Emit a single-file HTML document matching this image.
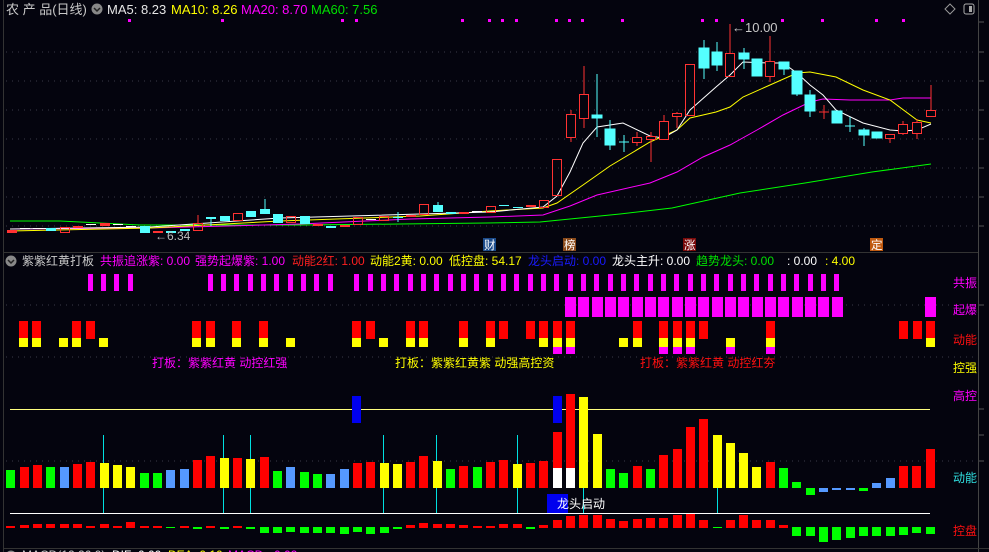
<!DOCTYPE html>
<html><head><meta charset="utf-8"><style>
html,body{margin:0;padding:0;background:#04040e;}
svg{display:block;font-family:"Liberation Sans","Noto Sans CJK SC",sans-serif;}
</style></head><body>
<svg width="989" height="552" viewBox="0 0 989 552" xmlns="http://www.w3.org/2000/svg">
<rect width="989" height="552" fill="#04040e"/>
<!-- borders -->
<line x1="3.5" y1="0" x2="3.5" y2="552" stroke="#333" />
<line x1="978.5" y1="0" x2="978.5" y2="552" stroke="#444"/>
<line x1="4" y1="252.5" x2="978" y2="252.5" stroke="#333"/>
<line x1="4" y1="548.5" x2="989" y2="548.5" stroke="#333"/>
<g stroke="#555"><line x1="979" y1="22" x2="984" y2="22"/><line x1="979" y1="52" x2="984" y2="52"/><line x1="979" y1="81" x2="984" y2="81"/><line x1="979" y1="110" x2="984" y2="110"/><line x1="979" y1="139" x2="984" y2="139"/><line x1="979" y1="168" x2="984" y2="168"/><line x1="979" y1="197" x2="984" y2="197"/><line x1="979" y1="226" x2="984" y2="226"/><line x1="979" y1="305" x2="984" y2="305"/><line x1="979" y1="409" x2="984" y2="409"/><line x1="979" y1="435" x2="984" y2="435"/><line x1="979" y1="461" x2="984" y2="461"/></g>
<!-- grid -->
<g stroke="#3a3a48" stroke-dasharray="1,5">
<line x1="6" y1="52" x2="976" y2="52"/><line x1="6" y1="81" x2="976" y2="81"/><line x1="6" y1="110" x2="976" y2="110"/><line x1="6" y1="139" x2="976" y2="139"/><line x1="6" y1="168" x2="976" y2="168"/><line x1="6" y1="197" x2="976" y2="197"/><line x1="6" y1="226" x2="976" y2="226"/>
<line x1="6" y1="305" x2="976" y2="305"/><line x1="6" y1="357" x2="976" y2="357"/><line x1="6" y1="461" x2="976" y2="461"/>
</g>
<!-- header -->
<text x="6" y="14" font-size="13" fill="#c8c8c8">农 产 品(日线)</text>
<circle cx="97" cy="9" r="5.5" fill="#888"/><path d="M94 8 L97 11 L100 8" stroke="#222" fill="none" stroke-width="1.5"/>
<text x="107" y="14" font-size="13" fill="#e6e6e6">MA5: 8.23</text>
<text x="171" y="14" font-size="13" fill="#ffff00">MA10: 8.26</text>
<text x="241" y="14" font-size="13" fill="#ff00ff">MA20: 8.70</text>
<text x="311" y="14" font-size="13" fill="#00e000">MA60: 7.56</text>
<path d="M950 4 L955 9 L950 14 L945 9 Z" stroke="#999" fill="none"/>
<rect x="964" y="4" width="10" height="10" rx="2" stroke="#aaa" fill="none"/><rect x="969" y="6" width="3" height="6" fill="#aaa"/>
<!-- magenta dots -->
<g fill="#ff00ff"><rect x="128" y="19" width="3" height="3"/><rect x="221" y="19" width="3" height="3"/><rect x="341" y="19" width="3" height="3"/><rect x="355" y="19" width="3" height="3"/><rect x="461" y="19" width="3" height="3"/><rect x="488" y="19" width="3" height="3"/><rect x="501" y="19" width="3" height="3"/><rect x="515" y="19" width="3" height="3"/><rect x="555" y="19" width="3" height="3"/><rect x="568" y="19" width="3" height="3"/><rect x="581" y="19" width="3" height="3"/><rect x="621" y="19" width="3" height="3"/><rect x="701" y="19" width="3" height="3"/><rect x="715" y="19" width="3" height="3"/><rect x="741" y="19" width="3" height="3"/><rect x="781" y="19" width="3" height="3"/><rect x="821" y="19" width="3" height="3"/><rect x="875" y="19" width="3" height="3"/><rect x="902" y="19" width="3" height="3"/></g>
<!-- MA lines -->
<polyline fill="none" stroke="#00ff00" stroke-width="1" points="10,221 60,221 100,223 140,225 300,225 400,224 486,223 540,222 620,214 672,208 740,193 805,183 872,172 931,164"/>
<polyline fill="none" stroke="#ff00ff" stroke-width="1" points="10,229 150,228 300,224 410,219 490,217 543,215 570,206 597,195 650,183 677,172 703,157 730,145 757,130 783,115 810,102 823,99 850,100 890,100 903,98 931,98"/>
<polyline fill="none" stroke="#ffff00" stroke-width="1" points="10,231 150,228 280,221 420,216 490,211 543,208 557,203 583,185 610,166 650,142 677,130 690,118 716,112 730,107 743,97 770,85 797,73 810,72 836,77 863,90 890,100 917,120 931,123"/>
<polyline fill="none" stroke="#ffffff" stroke-width="1" points="10,229 150,227 280,218 420,214 490,212 543,207 557,196 570,172 583,143 597,127 623,123 650,136 663,138 677,130 690,110 716,87 730,75 743,62 770,63 783,63 797,73 810,85 823,95 836,110 863,123 890,130 903,131 917,130 931,124"/>
<!-- candles -->
<g stroke-width="1">
<!-- left small -->
<g fill="#ff3232"><rect x="7" y="230" width="10" height="3"/><rect x="73" y="226" width="10" height="2"/><rect x="100" y="223" width="10" height="3"/><rect x="153" y="231" width="10" height="2"/><rect x="313" y="224" width="10" height="2"/><rect x="340" y="225" width="10" height="2"/><rect x="406" y="215" width="10" height="2"/><rect x="459" y="212" width="10" height="2"/><rect x="526" y="205" width="10" height="2"/></g>
<g fill="#ffffff"><rect x="20" y="228" width="10" height="1"/><rect x="33" y="228" width="10" height="1"/><rect x="86" y="224" width="10" height="1"/><rect x="113" y="224" width="10" height="1"/><rect x="126" y="226" width="10" height="1"/><rect x="366" y="219" width="10" height="1"/><rect x="472" y="211" width="10" height="1"/></g>
<g fill="#54ffff"><rect x="46" y="228" width="10" height="3"/><rect x="140" y="226" width="10" height="7"/><rect x="166" y="231" width="10" height="2"/><rect x="180" y="229" width="10" height="2"/><rect x="206" y="217" width="10" height="2"/><rect x="220" y="216" width="10" height="5"/><rect x="246" y="211" width="10" height="6"/><rect x="260" y="209" width="10" height="5"/><rect x="273" y="214" width="10" height="9"/><rect x="300" y="216" width="10" height="8"/><rect x="326" y="226" width="10" height="2"/><rect x="393" y="217" width="10" height="1"/><rect x="433" y="205" width="10" height="7"/><rect x="446" y="212" width="10" height="2"/><rect x="499" y="205" width="10" height="1"/><rect x="513" y="207" width="10" height="1"/></g>
<g stroke="#54ffff"><line x1="265" y1="199" x2="265" y2="209"/><line x1="211" y1="219" x2="211" y2="226"/><line x1="398" y1="212" x2="398" y2="222"/><line x1="438" y1="202" x2="438" y2="205"/></g>
<g stroke="#ff3232" fill="none"><rect x="60.5" y="227.5" width="9" height="5"/><rect x="193.5" y="223.5" width="9" height="7"/><line x1="198" y1="215" x2="198" y2="223"/><rect x="233.5" y="213.5" width="9" height="7"/><rect x="286.5" y="216.5" width="9" height="6"/><rect x="353.5" y="217.5" width="9" height="7"/><rect x="379.5" y="216.5" width="9" height="4"/><rect x="419.5" y="204.5" width="9" height="10"/><rect x="486.5" y="206.5" width="9" height="6"/><rect x="539.5" y="200.5" width="9" height="7"/></g>
<!-- right big -->
<g stroke="#ff3232" fill="none">
<rect x="552.5" y="159.5" width="9" height="36"/>
<line x1="571" y1="110" x2="571" y2="142"/><rect x="566.5" y="114.5" width="9" height="23" fill="#04040e"/>
<line x1="584" y1="66" x2="584" y2="128"/><rect x="579.5" y="94.5" width="9" height="24" fill="#04040e"/>
<line x1="637" y1="132" x2="637" y2="146"/><rect x="632.5" y="137.5" width="9" height="5" fill="#04040e"/>
<line x1="651" y1="132" x2="651" y2="162"/><rect x="646.5" y="136.5" width="9" height="3" fill="#04040e"/>
<line x1="664" y1="115" x2="664" y2="121"/><rect x="659.5" y="121.5" width="9" height="18" fill="#04040e"/>
<line x1="677" y1="112" x2="677" y2="128"/><rect x="672.5" y="113.5" width="9" height="3" fill="#04040e"/>
<rect x="685.5" y="64.5" width="9" height="51"/>
<line x1="730" y1="24" x2="730" y2="53"/><rect x="725.5" y="53.5" width="9" height="23"/>
<line x1="770" y1="36" x2="770" y2="82"/><rect x="765.5" y="61.5" width="9" height="15" fill="#04040e"/>
<line x1="824" y1="105" x2="824" y2="119"/><line x1="819" y1="112" x2="829" y2="112"/>
<line x1="890" y1="138" x2="890" y2="143"/><rect x="885.5" y="134.5" width="9" height="4" fill="#04040e"/>
<line x1="903" y1="121" x2="903" y2="135"/><rect x="898.5" y="124.5" width="9" height="9" fill="#04040e"/>
<line x1="917" y1="119" x2="917" y2="139"/><rect x="912.5" y="122.5" width="9" height="11" fill="#04040e"/>
<line x1="931" y1="85" x2="931" y2="110"/><rect x="926.5" y="110.5" width="9" height="6" fill="#04040e"/>
</g>
<g stroke="#54ffff" fill="#54ffff">
<line x1="597" y1="74" x2="597" y2="137"/><rect x="592" y="115" width="10" height="3"/>
<line x1="610" y1="120" x2="610" y2="150"/><rect x="605" y="129" width="10" height="16"/>
<line x1="624" y1="135" x2="624" y2="152"/><line x1="619" y1="142" x2="629" y2="142"/>
<line x1="704" y1="40" x2="704" y2="79"/><rect x="699" y="48" width="10" height="20"/>
<line x1="717" y1="42" x2="717" y2="71"/><rect x="712" y="52" width="10" height="13"/>
<line x1="744" y1="48" x2="744" y2="69"/><rect x="739" y="53" width="10" height="6"/>
<rect x="752" y="59" width="10" height="17"/>
<line x1="784" y1="62" x2="784" y2="75"/><rect x="779" y="62" width="10" height="7"/>
<line x1="797" y1="71" x2="797" y2="96"/><rect x="792" y="71" width="10" height="23"/>
<line x1="810" y1="90" x2="810" y2="117"/><rect x="805" y="95" width="10" height="16"/>
<rect x="832" y="111" width="10" height="12"/>
<line x1="850" y1="117" x2="850" y2="132"/><line x1="845" y1="126" x2="855" y2="126"/>
<line x1="864" y1="128" x2="864" y2="146"/><rect x="859" y="130" width="10" height="5"/>
<rect x="872" y="132" width="10" height="6"/>
</g>
</g>
<text x="732" y="32" font-size="13" fill="#c8c8c8">←</text>
<text x="745" y="32" font-size="13" fill="#c8c8c8">10.00</text>
<text x="155" y="240" font-size="12" fill="#bbbbbb">←6.34</text>
<!-- badges -->
<rect x="483" y="238" width="13" height="13" fill="#1a4a8a"/><text x="484" y="249" font-size="11.5" fill="#fff">财</text>
<rect x="563" y="238" width="13" height="13" fill="#8a4a1a"/><text x="564" y="249" font-size="11.5" fill="#fff">榜</text>
<rect x="683" y="238" width="13" height="13" fill="#7a0a0a"/><text x="684" y="249" font-size="11.5" fill="#fff">涨</text>
<rect x="870" y="238" width="13" height="13" fill="#c05a10"/><text x="871" y="249" font-size="11.5" fill="#fff">定</text>
<!-- indicator header -->
<circle cx="11" cy="261" r="5.5" fill="#888"/><path d="M8 260 L11 263 L14 260" stroke="#222" fill="none" stroke-width="1.5"/>
<g font-size="12">
<text x="22" y="265" fill="#c8c8c8">紫紫红黄打板</text>
<text x="100" y="265" fill="#ff00ff">共振追涨紫: 0.00</text>
<text x="195" y="265" fill="#ff00ff">强势起爆紫: 1.00</text>
<text x="292" y="265" fill="#ff2020">动能2红: 1.00</text>
<text x="370" y="265" fill="#ffff00">动能2黄: 0.00</text>
<text x="449" y="265" fill="#ffff00">低控盘: 54.17</text>
<text x="528" y="265" fill="#1a1aff">龙头启动: 0.00</text>
<text x="612" y="265" fill="#ffffff">龙头主升: 0.00</text>
<text x="696" y="265" fill="#00e000">趋势龙头: 0.00</text>
<text x="787" y="265" fill="#ffffff">: 0.00</text>
<text x="825" y="265" fill="#ffff00">: 4.00</text>
</g>
<!-- 共振 -->
<g fill="#ff00ff">
<rect x="88" y="274" width="5" height="17"/><rect x="101" y="274" width="5" height="17"/><rect x="114" y="274" width="5" height="17"/><rect x="128" y="274" width="5" height="17"/>
<rect x="208" y="274" width="5" height="17"/><rect x="221" y="274" width="5" height="17"/><rect x="234" y="274" width="5" height="17"/><rect x="248" y="274" width="5" height="17"/><rect x="261" y="274" width="5" height="17"/><rect x="274" y="274" width="5" height="17"/><rect x="288" y="274" width="5" height="17"/><rect x="301" y="274" width="5" height="17"/><rect x="314" y="274" width="5" height="17"/><rect x="328" y="274" width="5" height="17"/>
<rect x="354" y="274" width="5" height="17"/><rect x="368" y="274" width="5" height="17"/><rect x="381" y="274" width="5" height="17"/><rect x="394" y="274" width="5" height="17"/><rect x="408" y="274" width="5" height="17"/><rect x="421" y="274" width="5" height="17"/><rect x="434" y="274" width="5" height="17"/><rect x="448" y="274" width="5" height="17"/><rect x="461" y="274" width="5" height="17"/><rect x="474" y="274" width="5" height="17"/><rect x="488" y="274" width="5" height="17"/><rect x="501" y="274" width="5" height="17"/><rect x="514" y="274" width="5" height="17"/><rect x="528" y="274" width="5" height="17"/><rect x="541" y="274" width="5" height="17"/><rect x="554" y="274" width="5" height="17"/><rect x="568" y="274" width="5" height="17"/><rect x="581" y="274" width="5" height="17"/><rect x="594" y="274" width="5" height="17"/><rect x="608" y="274" width="5" height="17"/><rect x="621" y="274" width="5" height="17"/><rect x="634" y="274" width="5" height="17"/><rect x="648" y="274" width="5" height="17"/><rect x="661" y="274" width="5" height="17"/><rect x="674" y="274" width="5" height="17"/><rect x="688" y="274" width="5" height="17"/><rect x="701" y="274" width="5" height="17"/><rect x="714" y="274" width="5" height="17"/><rect x="728" y="274" width="5" height="17"/><rect x="741" y="274" width="5" height="17"/><rect x="754" y="274" width="5" height="17"/><rect x="768" y="274" width="5" height="17"/><rect x="781" y="274" width="5" height="17"/><rect x="794" y="274" width="5" height="17"/><rect x="808" y="274" width="5" height="17"/><rect x="821" y="274" width="5" height="17"/><rect x="834" y="274" width="5" height="17"/>
</g>
<!-- 起爆 -->
<g fill="#ff00ff">
<rect x="565" y="297" width="11" height="20"/><rect x="578" y="297" width="11" height="20"/><rect x="592" y="297" width="11" height="20"/><rect x="605" y="297" width="11" height="20"/><rect x="618" y="297" width="11" height="20"/><rect x="632" y="297" width="11" height="20"/><rect x="645" y="297" width="11" height="20"/><rect x="658" y="297" width="11" height="20"/><rect x="672" y="297" width="11" height="20"/><rect x="685" y="297" width="11" height="20"/><rect x="698" y="297" width="11" height="20"/><rect x="712" y="297" width="11" height="20"/><rect x="725" y="297" width="11" height="20"/><rect x="738" y="297" width="11" height="20"/><rect x="752" y="297" width="11" height="20"/><rect x="765" y="297" width="11" height="20"/><rect x="778" y="297" width="11" height="20"/><rect x="792" y="297" width="11" height="20"/><rect x="805" y="297" width="11" height="20"/><rect x="818" y="297" width="11" height="20"/><rect x="832" y="297" width="11" height="20"/>
<rect x="925" y="297" width="11" height="20"/>
</g>
<!-- 动能 row -->
<g fill="#ff0000">
<rect x="19" y="321" width="9" height="17"/><rect x="32" y="321" width="9" height="17"/><rect x="72" y="321" width="9" height="17"/><rect x="86" y="321" width="9" height="18"/><rect x="192" y="321" width="9" height="17"/><rect x="206" y="321" width="9" height="17"/><rect x="232" y="321" width="9" height="17"/><rect x="259" y="321" width="9" height="17"/><rect x="352" y="321" width="9" height="17"/><rect x="366" y="321" width="9" height="18"/><rect x="406" y="321" width="9" height="17"/><rect x="419" y="321" width="9" height="17"/><rect x="459" y="321" width="9" height="17"/><rect x="486" y="321" width="9" height="17"/><rect x="499" y="321" width="9" height="18"/><rect x="526" y="321" width="9" height="18"/><rect x="539" y="321" width="9" height="17"/><rect x="553" y="321" width="9" height="17"/><rect x="566" y="321" width="9" height="17"/><rect x="633" y="321" width="9" height="17"/><rect x="659" y="321" width="9" height="17"/><rect x="673" y="321" width="9" height="17"/><rect x="686" y="321" width="9" height="17"/><rect x="699" y="321" width="9" height="18"/><rect x="766" y="321" width="9" height="17"/><rect x="899" y="321" width="9" height="18"/><rect x="913" y="321" width="9" height="18"/><rect x="926" y="321" width="9" height="17"/>
</g>
<g fill="#ffff00">
<rect x="19" y="338" width="9" height="9"/><rect x="32" y="338" width="9" height="9"/><rect x="59" y="338" width="9" height="9"/><rect x="72" y="338" width="9" height="9"/><rect x="99" y="338" width="9" height="9"/><rect x="192" y="338" width="9" height="9"/><rect x="206" y="338" width="9" height="9"/><rect x="232" y="338" width="9" height="9"/><rect x="259" y="338" width="9" height="9"/><rect x="286" y="338" width="9" height="9"/><rect x="352" y="338" width="9" height="9"/><rect x="379" y="338" width="9" height="9"/><rect x="406" y="338" width="9" height="9"/><rect x="419" y="338" width="9" height="9"/><rect x="459" y="338" width="9" height="9"/><rect x="486" y="338" width="9" height="9"/><rect x="539" y="338" width="9" height="9"/><rect x="553" y="338" width="9" height="9"/><rect x="566" y="338" width="9" height="9"/><rect x="619" y="338" width="9" height="9"/><rect x="633" y="338" width="9" height="9"/><rect x="659" y="338" width="9" height="9"/><rect x="673" y="338" width="9" height="9"/><rect x="686" y="338" width="9" height="9"/><rect x="726" y="338" width="9" height="9"/><rect x="766" y="338" width="9" height="9"/><rect x="926" y="338" width="9" height="9"/>
</g>
<g fill="#ff00ff">
<rect x="553" y="347" width="9" height="7"/><rect x="566" y="347" width="9" height="7"/><rect x="659" y="347" width="9" height="7"/><rect x="673" y="347" width="9" height="7"/><rect x="686" y="347" width="9" height="7"/><rect x="726" y="347" width="9" height="7"/><rect x="766" y="347" width="9" height="7"/>
</g>
<g font-size="12">
<text x="152" y="367" fill="#ff00ff">打板：紫紫红黄  动控红强</text>
<text x="395" y="367" fill="#ffff00">打板：紫紫红黄紫  动强高控资</text>
<text x="640" y="367" fill="#ff1010">打板：紫紫红黄  动控红夯</text>
</g>
<!-- right labels -->
<g font-size="12">
<text x="953" y="287" fill="#ff00ff">共振</text>
<text x="953" y="314" fill="#ff00ff">起爆</text>
<text x="953" y="344" fill="#ff1010">动能</text>
<text x="953" y="372" fill="#ffff00">控强</text>
<text x="953" y="400" fill="#ff00ff">高控</text>
<text x="953" y="482" fill="#30e0e0">动能</text>
<text x="953" y="535" fill="#ff1010">控盘</text>
</g>
<!-- lines -->
<line x1="10" y1="409.5" x2="930" y2="409.5" stroke="#ffff80"/>
<line x1="10" y1="513.5" x2="930" y2="513.5" stroke="#ffffff"/>
<g stroke="#00e0e0"><line x1="103.5" y1="435" x2="103.5" y2="513"/><line x1="223.5" y1="435" x2="223.5" y2="513"/><line x1="250.5" y1="435" x2="250.5" y2="513"/><line x1="383.5" y1="435" x2="383.5" y2="513"/><line x1="436.5" y1="435" x2="436.5" y2="513"/><line x1="517.5" y1="435" x2="517.5" y2="513"/><line x1="583.5" y1="435" x2="583.5" y2="513"/><line x1="717.5" y1="435" x2="717.5" y2="513"/></g>
<!-- momentum bars -->
<g>
<rect x="6" y="470" width="9" height="18" fill="#00ff00"/><rect x="20" y="467" width="9" height="21" fill="#ff0000"/><rect x="33" y="465" width="9" height="23" fill="#ff0000"/><rect x="46" y="467" width="9" height="21" fill="#00ff00"/><rect x="60" y="467" width="9" height="21" fill="#5599ff"/><rect x="73" y="464" width="9" height="24" fill="#ff0000"/><rect x="86" y="462" width="9" height="26" fill="#ff0000"/><rect x="100" y="463" width="9" height="25" fill="#ffff00"/><rect x="113" y="465" width="9" height="23" fill="#ffff00"/><rect x="126" y="467" width="9" height="21" fill="#ffff00"/><rect x="140" y="473" width="9" height="15" fill="#00ff00"/><rect x="153" y="473" width="9" height="15" fill="#00ff00"/><rect x="166" y="470" width="9" height="18" fill="#5599ff"/><rect x="180" y="469" width="9" height="19" fill="#5599ff"/><rect x="193" y="460" width="9" height="28" fill="#ff0000"/><rect x="206" y="456" width="9" height="32" fill="#ff0000"/><rect x="220" y="458" width="9" height="30" fill="#ffff00"/><rect x="233" y="458" width="9" height="30" fill="#ff0000"/><rect x="246" y="459" width="9" height="29" fill="#ffff00"/><rect x="260" y="457" width="9" height="31" fill="#ff0000"/><rect x="273" y="471" width="9" height="17" fill="#00ff00"/><rect x="286" y="467" width="9" height="21" fill="#5599ff"/><rect x="300" y="472" width="9" height="16" fill="#00ff00"/><rect x="313" y="474" width="9" height="14" fill="#00ff00"/><rect x="326" y="474" width="9" height="14" fill="#5599ff"/><rect x="340" y="469" width="9" height="19" fill="#5599ff"/><rect x="353" y="463" width="9" height="25" fill="#ff0000"/><rect x="366" y="462" width="9" height="26" fill="#ff0000"/><rect x="380" y="463" width="9" height="25" fill="#ffff00"/><rect x="393" y="464" width="9" height="24" fill="#ffff00"/><rect x="406" y="462" width="9" height="26" fill="#ff0000"/><rect x="419" y="456" width="9" height="32" fill="#ff0000"/><rect x="433" y="461" width="9" height="27" fill="#ffff00"/><rect x="446" y="469" width="9" height="19" fill="#00ff00"/><rect x="459" y="466" width="9" height="22" fill="#ff0000"/><rect x="473" y="467" width="9" height="21" fill="#00ff00"/><rect x="486" y="462" width="9" height="26" fill="#ff0000"/><rect x="499" y="460" width="9" height="28" fill="#ff0000"/><rect x="513" y="464" width="9" height="24" fill="#ffff00"/><rect x="526" y="463" width="9" height="25" fill="#ff0000"/><rect x="539" y="461" width="9" height="27" fill="#ff0000"/>
<rect x="553" y="432" width="9" height="56" fill="#ff0000"/><rect x="553" y="468" width="9" height="20" fill="#ffffff"/>
<rect x="566" y="394" width="9" height="94" fill="#ff0000"/><rect x="566" y="468" width="9" height="20" fill="#ffffff"/>
<rect x="579" y="397" width="9" height="91" fill="#ffff00"/><rect x="593" y="434" width="9" height="54" fill="#ffff00"/><rect x="606" y="469" width="9" height="19" fill="#00ff00"/><rect x="619" y="473" width="9" height="15" fill="#00ff00"/><rect x="633" y="466" width="9" height="22" fill="#ff0000"/><rect x="646" y="469" width="9" height="19" fill="#00ff00"/><rect x="659" y="455" width="9" height="33" fill="#ff0000"/><rect x="673" y="449" width="9" height="39" fill="#ff0000"/><rect x="686" y="427" width="9" height="61" fill="#ff0000"/><rect x="699" y="419" width="9" height="69" fill="#ff0000"/><rect x="713" y="435" width="9" height="53" fill="#ffff00"/><rect x="726" y="443" width="9" height="45" fill="#ffff00"/><rect x="739" y="453" width="9" height="35" fill="#ffff00"/><rect x="752" y="467" width="9" height="21" fill="#ffff00"/><rect x="766" y="462" width="9" height="26" fill="#ff0000"/><rect x="779" y="468" width="9" height="20" fill="#00ff00"/><rect x="792" y="482" width="9" height="6" fill="#00ff00"/><rect x="806" y="488" width="9" height="7" fill="#00ff00"/><rect x="819" y="488" width="9" height="4" fill="#5599ff"/><rect x="832" y="488" width="9" height="2" fill="#5599ff"/><rect x="846" y="488" width="9" height="2" fill="#5599ff"/><rect x="859" y="488" width="9" height="3" fill="#00ff00"/><rect x="872" y="483" width="9" height="5" fill="#5599ff"/><rect x="886" y="478" width="9" height="10" fill="#5599ff"/><rect x="899" y="466" width="9" height="22" fill="#ff0000"/><rect x="912" y="466" width="9" height="22" fill="#ff0000"/><rect x="926" y="449" width="9" height="39" fill="#ff0000"/>
</g>
<rect x="352" y="396" width="9" height="27" fill="#0000ee"/>
<rect x="553" y="396" width="9" height="27" fill="#0000ee"/>
<rect x="547" y="494" width="21" height="19" fill="#0000ee"/>
<text x="557" y="508" font-size="12" fill="#ffffff">龙头启动</text>
<!-- control bars -->
<g fill="#ff0000">
<rect x="6" y="526" width="9" height="2"/><rect x="20" y="525" width="9" height="3"/><rect x="33" y="524" width="9" height="4"/><rect x="46" y="524" width="9" height="4"/><rect x="60" y="524" width="9" height="4"/><rect x="73" y="524" width="9" height="4"/><rect x="86" y="526" width="9" height="2"/><rect x="100" y="524" width="9" height="4"/><rect x="113" y="526" width="9" height="2"/><rect x="126" y="522" width="9" height="6"/><rect x="140" y="526" width="9" height="2"/><rect x="153" y="526" width="9" height="2"/><rect x="180" y="526" width="9" height="2"/><rect x="206" y="526" width="9" height="2"/><rect x="233" y="526" width="9" height="2"/><rect x="406" y="525" width="9" height="3"/><rect x="419" y="523" width="9" height="5"/><rect x="433" y="524" width="9" height="4"/><rect x="446" y="524" width="9" height="4"/><rect x="459" y="525" width="9" height="3"/><rect x="473" y="526" width="9" height="2"/><rect x="486" y="526" width="9" height="2"/><rect x="499" y="524" width="9" height="4"/><rect x="513" y="524" width="9" height="4"/><rect x="539" y="525" width="9" height="3"/><rect x="553" y="520" width="9" height="8"/><rect x="566" y="516" width="9" height="12"/><rect x="579" y="515" width="9" height="13"/><rect x="593" y="515" width="9" height="13"/><rect x="606" y="519" width="9" height="9"/><rect x="619" y="521" width="9" height="7"/><rect x="633" y="519" width="9" height="9"/><rect x="646" y="518" width="9" height="10"/><rect x="659" y="518" width="9" height="10"/><rect x="673" y="515" width="9" height="13"/><rect x="686" y="514" width="9" height="14"/><rect x="699" y="520" width="9" height="8"/><rect x="726" y="520" width="9" height="8"/><rect x="739" y="515" width="9" height="13"/><rect x="752" y="520" width="9" height="8"/><rect x="766" y="520" width="9" height="8"/><rect x="779" y="525" width="9" height="3"/>
</g>
<g fill="#00ff00">
<rect x="166" y="527" width="9" height="1"/><rect x="193" y="527" width="9" height="2"/><rect x="220" y="527" width="9" height="2"/><rect x="246" y="527" width="9" height="2"/><rect x="260" y="527" width="9" height="6"/><rect x="273" y="527" width="9" height="6"/><rect x="286" y="527" width="9" height="5"/><rect x="300" y="527" width="9" height="6"/><rect x="313" y="527" width="9" height="6"/><rect x="326" y="527" width="9" height="6"/><rect x="340" y="527" width="9" height="7"/><rect x="353" y="527" width="9" height="5"/><rect x="366" y="527" width="9" height="7"/><rect x="380" y="527" width="9" height="6"/><rect x="393" y="527" width="9" height="2"/><rect x="526" y="527" width="9" height="2"/><rect x="713" y="527" width="9" height="1"/><rect x="792" y="527" width="9" height="9"/><rect x="806" y="527" width="9" height="9"/><rect x="819" y="527" width="9" height="15"/><rect x="832" y="527" width="9" height="13"/><rect x="846" y="527" width="9" height="11"/><rect x="859" y="527" width="9" height="9"/><rect x="872" y="527" width="9" height="9"/><rect x="886" y="527" width="9" height="9"/><rect x="899" y="527" width="9" height="8"/><rect x="912" y="527" width="9" height="6"/><rect x="926" y="527" width="9" height="7"/>
</g>
<!-- MACD header cut -->
<circle cx="11" cy="556" r="5.5" fill="#888"/>
<g font-size="12"><text x="22" y="559" fill="#c8c8c8">MACD(12,26,9)</text><text x="112" y="559" fill="#ffffff">DIF: 0.00</text><text x="168" y="559" fill="#ffff00">DEA: 0.10</text><text x="228" y="559" fill="#ff00ff">MACD: -0.02</text></g>
</svg>
</body></html>
